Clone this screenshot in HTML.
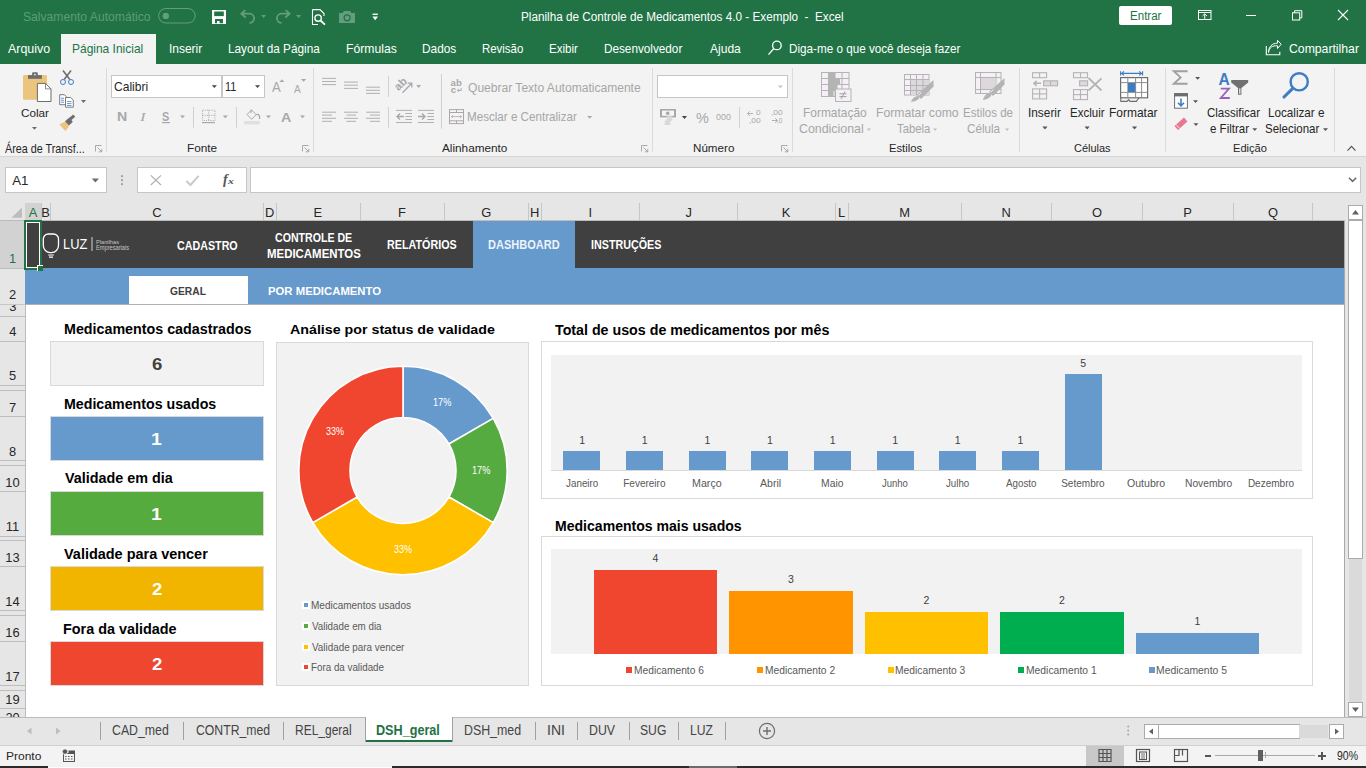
<!DOCTYPE html>
<html><head><meta charset="utf-8"><style>
html,body{margin:0;padding:0;width:1366px;height:768px;overflow:hidden;background:#fff;font-family:"Liberation Sans",sans-serif;}
body>div,body>svg{position:absolute;box-sizing:border-box;}
.t{white-space:nowrap;transform-origin:0 0;}
</style></head><body>
<div style="left:0px;top:0px;width:1366px;height:64px;background:#217346;"></div>
<div style="left:61px;top:34px;width:95px;height:30px;background:#f3f3f3;"></div>
<div style="left:0px;top:64px;width:1366px;height:92px;background:#f3f3f3;"></div>
<div style="left:0px;top:156px;width:1366px;height:1px;background:#d5d5d5;"></div>
<div style="left:0px;top:157px;width:1366px;height:64px;background:#e6e6e6;"></div>
<div style="left:5px;top:167px;width:102px;height:26px;background:#fff;border:1px solid #c6c6c6;"></div>
<div style="left:137px;top:167px;width:110px;height:26px;background:#fff;border:1px solid #c6c6c6;"></div>
<div style="left:250px;top:167px;width:111px;height:26px;background:#fff;border:1px solid #c6c6c6;width:1111px;"></div>
<div style="left:0px;top:203px;width:1345px;height:18px;background:#e6e6e6;"></div>
<div style="left:0px;top:220px;width:1345px;height:1px;background:#bcbcbc;"></div>
<div style="left:25px;top:221px;width:1320px;height:497px;background:#ffffff;"></div>
<div style="left:0px;top:221px;width:25px;height:497px;background:#e6e6e6;"></div>
<div style="left:25px;top:221px;width:1px;height:497px;background:#bcbcbc;"></div>
<div style="left:25px;top:221px;width:1319px;height:47px;background:#404040;"></div>
<div style="left:473px;top:221px;width:102px;height:47px;background:#6699cc;"></div>
<div style="left:25px;top:268px;width:1319px;height:36px;background:#6699cc;"></div>
<div style="left:129px;top:276px;width:119px;height:28px;background:#ffffff;"></div>
<div style="left:25px;top:304px;width:1319px;height:1px;background:#b0b0b0;"></div>
<div style="left:50px;top:341px;width:214px;height:45px;background:#f2f2f2;border:1px solid #d9d9d9;"></div>
<div style="left:50px;top:416px;width:214px;height:45px;background:#6699cc;border:1px solid #d9d9d9;"></div>
<div style="left:50px;top:491px;width:214px;height:45px;background:#56ab3e;border:1px solid #d9d9d9;"></div>
<div style="left:50px;top:566px;width:214px;height:45px;background:#f1b500;border:1px solid #d9d9d9;"></div>
<div style="left:50px;top:641px;width:214px;height:45px;background:#ef462f;border:1px solid #d9d9d9;"></div>
<div style="left:276px;top:342px;width:253px;height:344px;background:#f2f2f2;border:1px solid #d9d9d9;"></div>
<div style="left:541px;top:341px;width:772px;height:158px;background:#ffffff;border:1px solid #d9d9d9;"></div>
<div style="left:551px;top:355px;width:751px;height:116px;background:#f2f2f2;"></div>
<div style="left:551px;top:470px;width:751px;height:1px;background:#d9d9d9;"></div>
<div style="left:541px;top:536px;width:772px;height:150px;background:#ffffff;border:1px solid #d9d9d9;"></div>
<div style="left:551px;top:549px;width:751px;height:105px;background:#f2f2f2;"></div>
<div style="left:1345px;top:203px;width:21px;height:515px;background:#e6e6e6;"></div>
<div style="left:1344px;top:221px;width:1px;height:497px;background:#a8a8a8;"></div>
<div style="left:0px;top:746px;width:1366px;height:21px;background:#f3f3f3;"></div>
<div style="left:0px;top:766px;width:48px;height:2px;background:#2b2b2b;"></div>
<div style="left:392px;top:766px;width:297px;height:2px;background:#2b2b2b;"></div>
<div style="left:689px;top:766px;width:48px;height:2px;background:#6b6b6b;"></div>
<div style="left:737px;top:766px;width:629px;height:2px;background:#2b2b2b;"></div>
<div class="t" style="left:22.91px;top:10.77px;font-size:12.79px;line-height:12.79px;color:#5e9c77;font-weight:normal;font-style:normal;font-family:'Liberation Sans',sans-serif;transform:scaleX(0.9500);">Salvamento Automático</div>
<div class="t" style="left:520.56px;top:10.22px;font-size:13.08px;line-height:13.08px;color:#ffffff;font-weight:normal;font-style:normal;font-family:'Liberation Sans',sans-serif;transform:scaleX(0.8968);">Planilha de Controle de Medicamentos 4.0 - Exemplo  -  Excel</div>
<div style="left:1119px;top:6px;width:53px;height:19px;background:#ffffff;border-radius:2px;"></div>
<div class="t" style="left:1129.68px;top:10.09px;font-size:12.65px;line-height:12.65px;color:#217346;font-weight:normal;font-style:normal;font-family:'Liberation Sans',sans-serif;transform:scaleX(0.9140);">Entrar</div>
<div class="t" style="left:8.10px;top:43.19px;font-size:12.06px;line-height:12.06px;color:#fff;font-weight:normal;font-style:normal;font-family:'Liberation Sans',sans-serif;transform:scaleX(1.0304);">Arquivo</div>
<div class="t" style="left:72.44px;top:43.19px;font-size:12.06px;line-height:12.06px;color:#217346;font-weight:normal;font-style:normal;font-family:'Liberation Sans',sans-serif;transform:scaleX(0.9937);">Página Inicial</div>
<div class="t" style="left:168.92px;top:43.19px;font-size:12.06px;line-height:12.06px;color:#fff;font-weight:normal;font-style:normal;font-family:'Liberation Sans',sans-serif;transform:scaleX(0.9915);">Inserir</div>
<div class="t" style="left:228.06px;top:43.19px;font-size:12.06px;line-height:12.06px;color:#fff;font-weight:normal;font-style:normal;font-family:'Liberation Sans',sans-serif;transform:scaleX(0.9786);">Layout da Página</div>
<div class="t" style="left:345.82px;top:43.19px;font-size:12.06px;line-height:12.06px;color:#fff;font-weight:normal;font-style:normal;font-family:'Liberation Sans',sans-serif;transform:scaleX(1.0113);">Fórmulas</div>
<div class="t" style="left:422.05px;top:43.19px;font-size:12.06px;line-height:12.06px;color:#fff;font-weight:normal;font-style:normal;font-family:'Liberation Sans',sans-serif;transform:scaleX(0.9837);">Dados</div>
<div class="t" style="left:481.88px;top:43.19px;font-size:12.06px;line-height:12.06px;color:#fff;font-weight:normal;font-style:normal;font-family:'Liberation Sans',sans-serif;transform:scaleX(0.9482);">Revisão</div>
<div class="t" style="left:549.28px;top:43.19px;font-size:12.06px;line-height:12.06px;color:#fff;font-weight:normal;font-style:normal;font-family:'Liberation Sans',sans-serif;transform:scaleX(0.9572);">Exibir</div>
<div class="t" style="left:604.46px;top:43.19px;font-size:12.06px;line-height:12.06px;color:#fff;font-weight:normal;font-style:normal;font-family:'Liberation Sans',sans-serif;transform:scaleX(0.9742);">Desenvolvedor</div>
<div class="t" style="left:710.00px;top:43.19px;font-size:12.06px;line-height:12.06px;color:#fff;font-weight:normal;font-style:normal;font-family:'Liberation Sans',sans-serif;">Ajuda</div>
<div class="t" style="left:789.46px;top:43.19px;font-size:12.06px;line-height:12.06px;color:#fff;font-weight:normal;font-style:normal;font-family:'Liberation Sans',sans-serif;transform:scaleX(0.9698);">Diga-me o que você deseja fazer</div>
<div class="t" style="left:1288.89px;top:43.19px;font-size:12.06px;line-height:12.06px;color:#fff;font-weight:normal;font-style:normal;font-family:'Liberation Sans',sans-serif;transform:scaleX(1.0147);">Compartilhar</div>
<div class="t" style="left:21.11px;top:108.22px;font-size:11.19px;line-height:11.19px;color:#262626;font-weight:normal;font-style:normal;font-family:'Liberation Sans',sans-serif;transform:scaleX(1.0484);">Colar</div>
<div class="t" style="left:4.50px;top:142.59px;font-size:12.06px;line-height:12.06px;color:#262626;font-weight:normal;font-style:normal;font-family:'Liberation Sans',sans-serif;transform:scaleX(0.8954);">Área de Transf...</div>
<div class="t" style="left:186.76px;top:143.32px;font-size:10.61px;line-height:10.61px;color:#262626;font-weight:normal;font-style:normal;font-family:'Liberation Sans',sans-serif;transform:scaleX(1.1120);">Fonte</div>
<div class="t" style="left:467.82px;top:81.66px;font-size:12.21px;line-height:12.21px;color:#a6a6a6;font-weight:normal;font-style:normal;font-family:'Liberation Sans',sans-serif;transform:scaleX(0.9878);">Quebrar Texto Automaticamente</div>
<div class="t" style="left:467.37px;top:111.45px;font-size:12.94px;line-height:12.94px;color:#a6a6a6;font-weight:normal;font-style:normal;font-family:'Liberation Sans',sans-serif;transform:scaleX(0.8983);">Mesclar e Centralizar</div>
<div class="t" style="left:442.20px;top:143.32px;font-size:10.61px;line-height:10.61px;color:#262626;font-weight:normal;font-style:normal;font-family:'Liberation Sans',sans-serif;transform:scaleX(1.1092);">Alinhamento</div>
<div class="t" style="left:693.27px;top:143.25px;font-size:11.05px;line-height:11.05px;color:#262626;font-weight:normal;font-style:normal;font-family:'Liberation Sans',sans-serif;transform:scaleX(1.0525);">Número</div>
<div class="t" style="left:803.44px;top:106.77px;font-size:12.79px;line-height:12.79px;color:#a6a6a6;font-weight:normal;font-style:normal;font-family:'Liberation Sans',sans-serif;transform:scaleX(0.9347);">Formatação</div>
<div class="t" style="left:799.08px;top:123.17px;font-size:12.79px;line-height:12.79px;color:#a6a6a6;font-weight:normal;font-style:normal;font-family:'Liberation Sans',sans-serif;transform:scaleX(0.9678);">Condicional</div>
<div class="t" style="left:875.52px;top:106.77px;font-size:12.79px;line-height:12.79px;color:#a6a6a6;font-weight:normal;font-style:normal;font-family:'Liberation Sans',sans-serif;transform:scaleX(0.9539);">Formatar como</div>
<div class="t" style="left:896.67px;top:123.17px;font-size:12.79px;line-height:12.79px;color:#a6a6a6;font-weight:normal;font-style:normal;font-family:'Liberation Sans',sans-serif;transform:scaleX(0.8830);">Tabela</div>
<div class="t" style="left:962.68px;top:106.77px;font-size:12.79px;line-height:12.79px;color:#a6a6a6;font-weight:normal;font-style:normal;font-family:'Liberation Sans',sans-serif;transform:scaleX(0.9024);">Estilos de</div>
<div class="t" style="left:966.92px;top:123.17px;font-size:12.79px;line-height:12.79px;color:#a6a6a6;font-weight:normal;font-style:normal;font-family:'Liberation Sans',sans-serif;transform:scaleX(0.9111);">Célula</div>
<div class="t" style="left:888.70px;top:143.29px;font-size:10.76px;line-height:10.76px;color:#262626;font-weight:normal;font-style:normal;font-family:'Liberation Sans',sans-serif;transform:scaleX(1.0460);">Estilos</div>
<div class="t" style="left:1028.23px;top:107.44px;font-size:12.35px;line-height:12.35px;color:#262626;font-weight:normal;font-style:normal;font-family:'Liberation Sans',sans-serif;transform:scaleX(0.9591);">Inserir</div>
<div class="t" style="left:1069.58px;top:107.44px;font-size:12.35px;line-height:12.35px;color:#262626;font-weight:normal;font-style:normal;font-family:'Liberation Sans',sans-serif;transform:scaleX(0.9326);">Excluir</div>
<div class="t" style="left:1109.44px;top:107.44px;font-size:12.35px;line-height:12.35px;color:#262626;font-weight:normal;font-style:normal;font-family:'Liberation Sans',sans-serif;transform:scaleX(0.9701);">Formatar</div>
<div class="t" style="left:1074.15px;top:143.45px;font-size:11.05px;line-height:11.05px;color:#262626;font-weight:normal;font-style:normal;font-family:'Liberation Sans',sans-serif;transform:scaleX(0.9929);">Células</div>
<div class="t" style="left:1206.93px;top:107.71px;font-size:11.92px;line-height:11.92px;color:#262626;font-weight:normal;font-style:normal;font-family:'Liberation Sans',sans-serif;transform:scaleX(0.9647);">Classificar</div>
<div class="t" style="left:1210.04px;top:123.61px;font-size:11.92px;line-height:11.92px;color:#262626;font-weight:normal;font-style:normal;font-family:'Liberation Sans',sans-serif;transform:scaleX(0.9683);">e Filtrar</div>
<div class="t" style="left:1268.37px;top:107.71px;font-size:11.92px;line-height:11.92px;color:#262626;font-weight:normal;font-style:normal;font-family:'Liberation Sans',sans-serif;transform:scaleX(0.9795);">Localizar e</div>
<div class="t" style="left:1264.84px;top:123.61px;font-size:11.92px;line-height:11.92px;color:#262626;font-weight:normal;font-style:normal;font-family:'Liberation Sans',sans-serif;transform:scaleX(0.9644);">Selecionar</div>
<div class="t" style="left:1232.71px;top:143.27px;font-size:10.90px;line-height:10.90px;color:#262626;font-weight:normal;font-style:normal;font-family:'Liberation Sans',sans-serif;transform:scaleX(1.0198);">Edição</div>
<div class="t" style="left:12.30px;top:174.40px;font-size:13.23px;line-height:13.23px;color:#262626;font-weight:normal;font-style:normal;font-family:'Liberation Sans',sans-serif;">A1</div>
<div style="left:25px;top:203px;width:16px;height:17px;background:#d2d2d2;"></div>
<div style="left:41px;top:203px;width:1px;height:17px;background:#c6c6c6;"></div>
<div style="left:50px;top:203px;width:1px;height:17px;background:#c6c6c6;"></div>
<div style="left:263px;top:203px;width:1px;height:17px;background:#c6c6c6;"></div>
<div style="left:276px;top:203px;width:1px;height:17px;background:#c6c6c6;"></div>
<div style="left:360px;top:203px;width:1px;height:17px;background:#c6c6c6;"></div>
<div style="left:444px;top:203px;width:1px;height:17px;background:#c6c6c6;"></div>
<div style="left:528px;top:203px;width:1px;height:17px;background:#c6c6c6;"></div>
<div style="left:541px;top:203px;width:1px;height:17px;background:#c6c6c6;"></div>
<div style="left:639px;top:203px;width:1px;height:17px;background:#c6c6c6;"></div>
<div style="left:737px;top:203px;width:1px;height:17px;background:#c6c6c6;"></div>
<div style="left:835px;top:203px;width:1px;height:17px;background:#c6c6c6;"></div>
<div style="left:848px;top:203px;width:1px;height:17px;background:#c6c6c6;"></div>
<div style="left:961px;top:203px;width:1px;height:17px;background:#c6c6c6;"></div>
<div style="left:1051px;top:203px;width:1px;height:17px;background:#c6c6c6;"></div>
<div style="left:1142px;top:203px;width:1px;height:17px;background:#c6c6c6;"></div>
<div style="left:1233px;top:203px;width:1px;height:17px;background:#c6c6c6;"></div>
<div style="left:1312px;top:203px;width:1px;height:17px;background:#c6c6c6;"></div>
<div class="t" style="left:28.68px;top:206.68px;font-size:12.90px;line-height:12.90px;color:#217346;font-weight:normal;font-style:normal;font-family:'Liberation Sans',sans-serif;">A</div>
<div class="t" style="left:41.28px;top:206.68px;font-size:12.90px;line-height:12.90px;color:#262626;font-weight:normal;font-style:normal;font-family:'Liberation Sans',sans-serif;">B</div>
<div class="t" style="left:152.23px;top:206.68px;font-size:12.90px;line-height:12.90px;color:#262626;font-weight:normal;font-style:normal;font-family:'Liberation Sans',sans-serif;">C</div>
<div class="t" style="left:264.95px;top:206.68px;font-size:12.90px;line-height:12.90px;color:#262626;font-weight:normal;font-style:normal;font-family:'Liberation Sans',sans-serif;">D</div>
<div class="t" style="left:313.62px;top:206.68px;font-size:12.90px;line-height:12.90px;color:#262626;font-weight:normal;font-style:normal;font-family:'Liberation Sans',sans-serif;">E</div>
<div class="t" style="left:398.04px;top:206.68px;font-size:12.90px;line-height:12.90px;color:#262626;font-weight:normal;font-style:normal;font-family:'Liberation Sans',sans-serif;">F</div>
<div class="t" style="left:481.35px;top:206.68px;font-size:12.90px;line-height:12.90px;color:#262626;font-weight:normal;font-style:normal;font-family:'Liberation Sans',sans-serif;">G</div>
<div class="t" style="left:529.99px;top:206.68px;font-size:12.90px;line-height:12.90px;color:#262626;font-weight:normal;font-style:normal;font-family:'Liberation Sans',sans-serif;">H</div>
<div class="t" style="left:588.39px;top:206.68px;font-size:12.90px;line-height:12.90px;color:#262626;font-weight:normal;font-style:normal;font-family:'Liberation Sans',sans-serif;">I</div>
<div class="t" style="left:685.41px;top:206.68px;font-size:12.90px;line-height:12.90px;color:#262626;font-weight:normal;font-style:normal;font-family:'Liberation Sans',sans-serif;">J</div>
<div class="t" style="left:781.63px;top:206.68px;font-size:12.90px;line-height:12.90px;color:#262626;font-weight:normal;font-style:normal;font-family:'Liberation Sans',sans-serif;">K</div>
<div class="t" style="left:837.92px;top:206.68px;font-size:12.90px;line-height:12.90px;color:#262626;font-weight:normal;font-style:normal;font-family:'Liberation Sans',sans-serif;">L</div>
<div class="t" style="left:899.28px;top:206.68px;font-size:12.90px;line-height:12.90px;color:#262626;font-weight:normal;font-style:normal;font-family:'Liberation Sans',sans-serif;">M</div>
<div class="t" style="left:1001.54px;top:206.68px;font-size:12.90px;line-height:12.90px;color:#262626;font-weight:normal;font-style:normal;font-family:'Liberation Sans',sans-serif;">N</div>
<div class="t" style="left:1091.88px;top:206.68px;font-size:12.90px;line-height:12.90px;color:#262626;font-weight:normal;font-style:normal;font-family:'Liberation Sans',sans-serif;">O</div>
<div class="t" style="left:1183.29px;top:206.68px;font-size:12.90px;line-height:12.90px;color:#262626;font-weight:normal;font-style:normal;font-family:'Liberation Sans',sans-serif;">P</div>
<div class="t" style="left:1268.08px;top:206.68px;font-size:12.90px;line-height:12.90px;color:#262626;font-weight:normal;font-style:normal;font-family:'Liberation Sans',sans-serif;">Q</div>
<div style="left:0px;top:221px;width:25px;height:47px;background:#d2d2d2;"></div>
<div style="left:0px;top:268px;width:25px;height:1px;background:#bdbdbd;"></div>
<div style="left:0px;top:304px;width:25px;height:1px;background:#bdbdbd;"></div>
<div style="left:0px;top:316px;width:25px;height:1px;background:#bdbdbd;"></div>
<div style="left:0px;top:341px;width:25px;height:1px;background:#bdbdbd;"></div>
<div style="left:0px;top:385px;width:25px;height:1px;background:#bdbdbd;"></div>
<div style="left:0px;top:390px;width:25px;height:1px;background:#bdbdbd;"></div>
<div style="left:0px;top:416px;width:25px;height:1px;background:#bdbdbd;"></div>
<div style="left:0px;top:460px;width:25px;height:1px;background:#bdbdbd;"></div>
<div style="left:0px;top:465px;width:25px;height:1px;background:#bdbdbd;"></div>
<div style="left:0px;top:491px;width:25px;height:1px;background:#bdbdbd;"></div>
<div style="left:0px;top:536px;width:25px;height:1px;background:#bdbdbd;"></div>
<div style="left:0px;top:540px;width:25px;height:1px;background:#bdbdbd;"></div>
<div style="left:0px;top:566px;width:25px;height:1px;background:#bdbdbd;"></div>
<div style="left:0px;top:610px;width:25px;height:1px;background:#bdbdbd;"></div>
<div style="left:0px;top:615px;width:25px;height:1px;background:#bdbdbd;"></div>
<div style="left:0px;top:641px;width:25px;height:1px;background:#bdbdbd;"></div>
<div style="left:0px;top:685px;width:25px;height:1px;background:#bdbdbd;"></div>
<div style="left:0px;top:690px;width:25px;height:1px;background:#bdbdbd;"></div>
<div style="left:0px;top:708px;width:25px;height:1px;background:#bdbdbd;"></div>
<div style="left:0px;top:726px;width:25px;height:1px;background:#bdbdbd;"></div>
<div class="t" style="left:8.96px;top:253.48px;font-size:12.90px;line-height:12.90px;color:#217346;font-weight:normal;font-style:normal;font-family:'Liberation Sans',sans-serif;">1</div>
<div class="t" style="left:9.09px;top:289.48px;font-size:12.90px;line-height:12.90px;color:#262626;font-weight:normal;font-style:normal;font-family:'Liberation Sans',sans-serif;">2</div>
<div class="t" style="left:9.15px;top:301.18px;font-size:12.90px;line-height:12.90px;color:#262626;font-weight:normal;font-style:normal;font-family:'Liberation Sans',sans-serif;">3</div>
<div class="t" style="left:9.15px;top:326.48px;font-size:12.90px;line-height:12.90px;color:#262626;font-weight:normal;font-style:normal;font-family:'Liberation Sans',sans-serif;">4</div>
<div class="t" style="left:9.09px;top:370.48px;font-size:12.90px;line-height:12.90px;color:#262626;font-weight:normal;font-style:normal;font-family:'Liberation Sans',sans-serif;">5</div>
<div class="t" style="left:9.09px;top:402.08px;font-size:12.90px;line-height:12.90px;color:#262626;font-weight:normal;font-style:normal;font-family:'Liberation Sans',sans-serif;">7</div>
<div class="t" style="left:9.09px;top:445.88px;font-size:12.90px;line-height:12.90px;color:#262626;font-weight:normal;font-style:normal;font-family:'Liberation Sans',sans-serif;">8</div>
<div class="t" style="left:5.31px;top:476.78px;font-size:12.90px;line-height:12.90px;color:#262626;font-weight:normal;font-style:normal;font-family:'Liberation Sans',sans-serif;">10</div>
<div class="t" style="left:5.85px;top:521.18px;font-size:12.90px;line-height:12.90px;color:#262626;font-weight:normal;font-style:normal;font-family:'Liberation Sans',sans-serif;">11</div>
<div class="t" style="left:5.31px;top:551.98px;font-size:12.90px;line-height:12.90px;color:#262626;font-weight:normal;font-style:normal;font-family:'Liberation Sans',sans-serif;">13</div>
<div class="t" style="left:5.24px;top:595.88px;font-size:12.90px;line-height:12.90px;color:#262626;font-weight:normal;font-style:normal;font-family:'Liberation Sans',sans-serif;">14</div>
<div class="t" style="left:5.31px;top:626.73px;font-size:12.90px;line-height:12.90px;color:#262626;font-weight:normal;font-style:normal;font-family:'Liberation Sans',sans-serif;">16</div>
<div class="t" style="left:5.37px;top:670.88px;font-size:12.90px;line-height:12.90px;color:#262626;font-weight:normal;font-style:normal;font-family:'Liberation Sans',sans-serif;">17</div>
<div class="t" style="left:5.37px;top:693.78px;font-size:12.90px;line-height:12.90px;color:#262626;font-weight:normal;font-style:normal;font-family:'Liberation Sans',sans-serif;">19</div>
<div class="t" style="left:5.44px;top:711.68px;font-size:12.90px;line-height:12.90px;color:#262626;font-weight:normal;font-style:normal;font-family:'Liberation Sans',sans-serif;">20</div>
<div style="left:0px;top:299px;width:25px;height:5px;background:#e6e6e6;"></div>
<div style="left:0px;top:304px;width:25px;height:1px;background:#c6c6c6;"></div>
<div class="t" style="left:62.87px;top:236.66px;font-size:14.10px;line-height:14.10px;color:#ffffff;font-weight:normal;font-style:normal;font-family:'Liberation Sans',sans-serif;transform:scaleX(0.9134);">LUZ</div>
<div style="left:91px;top:237px;width:2px;height:14px;background:#8a8a8a;"></div>
<div class="t" style="left:96.05px;top:239.23px;font-size:6.10px;line-height:6.10px;color:#c4c4c4;font-weight:normal;font-style:normal;font-family:'Liberation Sans',sans-serif;transform:scaleX(0.9294);">Planilhas</div>
<div class="t" style="left:96.05px;top:244.99px;font-size:6.40px;line-height:6.40px;color:#c4c4c4;font-weight:normal;font-style:normal;font-family:'Liberation Sans',sans-serif;transform:scaleX(0.8877);">Empresariais</div>
<div class="t" style="left:176.87px;top:239.96px;font-size:12.21px;line-height:12.21px;color:#ffffff;font-weight:bold;font-style:normal;font-family:'Liberation Sans',sans-serif;transform:scaleX(0.8779);">CADASTRO</div>
<div class="t" style="left:274.98px;top:232.09px;font-size:12.06px;line-height:12.06px;color:#ffffff;font-weight:bold;font-style:normal;font-family:'Liberation Sans',sans-serif;transform:scaleX(0.8795);">CONTROLE DE</div>
<div class="t" style="left:266.81px;top:248.46px;font-size:12.21px;line-height:12.21px;color:#ffffff;font-weight:bold;font-style:normal;font-family:'Liberation Sans',sans-serif;transform:scaleX(0.9375);">MEDICAMENTOS</div>
<div class="t" style="left:387.05px;top:240.01px;font-size:11.92px;line-height:11.92px;color:#ffffff;font-weight:bold;font-style:normal;font-family:'Liberation Sans',sans-serif;transform:scaleX(0.9028);">RELATÓRIOS</div>
<div class="t" style="left:487.64px;top:240.01px;font-size:11.92px;line-height:11.92px;color:#eef4fb;font-weight:bold;font-style:normal;font-family:'Liberation Sans',sans-serif;transform:scaleX(0.9257);">DASHBOARD</div>
<div class="t" style="left:590.66px;top:240.01px;font-size:11.92px;line-height:11.92px;color:#ffffff;font-weight:bold;font-style:normal;font-family:'Liberation Sans',sans-serif;transform:scaleX(0.9015);">INSTRUÇÕES</div>
<div class="t" style="left:170.39px;top:284.95px;font-size:11.63px;line-height:11.63px;color:#404040;font-weight:bold;font-style:normal;font-family:'Liberation Sans',sans-serif;transform:scaleX(0.8827);">GERAL</div>
<div class="t" style="left:268.12px;top:284.95px;font-size:11.63px;line-height:11.63px;color:#ffffff;font-weight:bold;font-style:normal;font-family:'Liberation Sans',sans-serif;transform:scaleX(0.9745);">POR MEDICAMENTO</div>
<div class="t" style="left:63.84px;top:322.91px;font-size:13.81px;line-height:13.81px;color:#000000;font-weight:bold;font-style:normal;font-family:'Liberation Sans',sans-serif;transform:scaleX(1.0352);">Medicamentos cadastrados</div>
<div class="t" style="left:63.65px;top:397.89px;font-size:13.95px;line-height:13.95px;color:#000000;font-weight:bold;font-style:normal;font-family:'Liberation Sans',sans-serif;transform:scaleX(1.0181);">Medicamentos usados</div>
<div class="t" style="left:64.50px;top:472.39px;font-size:13.95px;line-height:13.95px;color:#000000;font-weight:bold;font-style:normal;font-family:'Liberation Sans',sans-serif;transform:scaleX(1.0296);">Validade em dia</div>
<div class="t" style="left:63.90px;top:547.69px;font-size:13.95px;line-height:13.95px;color:#000000;font-weight:bold;font-style:normal;font-family:'Liberation Sans',sans-serif;transform:scaleX(1.0367);">Validade para vencer</div>
<div class="t" style="left:63.04px;top:623.39px;font-size:13.95px;line-height:13.95px;color:#000000;font-weight:bold;font-style:normal;font-family:'Liberation Sans',sans-serif;transform:scaleX(1.0320);">Fora da validade</div>
<div class="t" style="left:152.04px;top:356.76px;font-size:15.99px;line-height:15.99px;color:#404040;font-weight:bold;font-style:normal;font-family:'Liberation Sans',sans-serif;transform:scaleX(1.1616);">6</div>
<div class="t" style="left:151.44px;top:430.72px;font-size:16.28px;line-height:16.28px;color:#ffffff;font-weight:bold;font-style:normal;font-family:'Liberation Sans',sans-serif;transform:scaleX(1.1894);">1</div>
<div class="t" style="left:151.44px;top:505.72px;font-size:16.28px;line-height:16.28px;color:#ffffff;font-weight:bold;font-style:normal;font-family:'Liberation Sans',sans-serif;transform:scaleX(1.1894);">1</div>
<div class="t" style="left:152.04px;top:580.62px;font-size:16.28px;line-height:16.28px;color:#ffffff;font-weight:bold;font-style:normal;font-family:'Liberation Sans',sans-serif;transform:scaleX(1.1408);">2</div>
<div class="t" style="left:152.04px;top:655.62px;font-size:16.28px;line-height:16.28px;color:#ffffff;font-weight:bold;font-style:normal;font-family:'Liberation Sans',sans-serif;transform:scaleX(1.1408);">2</div>
<div class="t" style="left:290.02px;top:322.93px;font-size:13.66px;line-height:13.66px;color:#000000;font-weight:bold;font-style:normal;font-family:'Liberation Sans',sans-serif;transform:scaleX(1.0422);">Análise por status de validade</div>
<div class="t" style="left:555.06px;top:322.86px;font-size:14.10px;line-height:14.10px;color:#000000;font-weight:bold;font-style:normal;font-family:'Liberation Sans',sans-serif;transform:scaleX(1.0105);">Total de usos de medicamentos por mês</div>
<div class="t" style="left:555.16px;top:519.99px;font-size:13.95px;line-height:13.95px;color:#000000;font-weight:bold;font-style:normal;font-family:'Liberation Sans',sans-serif;transform:scaleX(1.0082);">Medicamentos mais usados</div>
<svg style="left:290px;top:360px;" width="230" height="230" viewBox="0 0 230 230"><path d="M113.00,6.30 A104.2,104.2 0 0 1 203.24,58.40 L158.90,84.00 A53.0,53.0 0 0 0 113.00,57.50 Z" fill="#6699cc" stroke="#ffffff" stroke-width="1.6" stroke-linejoin="round"/><path d="M203.24,58.40 A104.2,104.2 0 0 1 203.24,162.60 L158.90,137.00 A53.0,53.0 0 0 0 158.90,84.00 Z" fill="#55ab3f" stroke="#ffffff" stroke-width="1.6" stroke-linejoin="round"/><path d="M203.24,162.60 A104.2,104.2 0 0 1 22.76,162.60 L67.10,137.00 A53.0,53.0 0 0 0 158.90,137.00 Z" fill="#ffc000" stroke="#ffffff" stroke-width="1.6" stroke-linejoin="round"/><path d="M22.76,162.60 A104.2,104.2 0 0 1 113.00,6.30 L113.00,57.50 A53.0,53.0 0 0 0 67.10,137.00 Z" fill="#f0462f" stroke="#ffffff" stroke-width="1.6" stroke-linejoin="round"/></svg>
<div class="t" style="left:433.36px;top:397.94px;font-size:10.47px;line-height:10.47px;color:#ffffff;font-weight:normal;font-style:normal;font-family:'Liberation Sans',sans-serif;transform:scaleX(0.8791);">17%</div>
<div class="t" style="left:472.36px;top:466.34px;font-size:10.47px;line-height:10.47px;color:#ffffff;font-weight:normal;font-style:normal;font-family:'Liberation Sans',sans-serif;transform:scaleX(0.8791);">17%</div>
<div class="t" style="left:393.93px;top:544.94px;font-size:10.47px;line-height:10.47px;color:#ffffff;font-weight:normal;font-style:normal;font-family:'Liberation Sans',sans-serif;transform:scaleX(0.8609);">33%</div>
<div class="t" style="left:325.73px;top:427.14px;font-size:10.47px;line-height:10.47px;color:#ffffff;font-weight:normal;font-style:normal;font-family:'Liberation Sans',sans-serif;transform:scaleX(0.8609);">33%</div>
<div style="left:302.3px;top:601.1999999999999px;width:7.5px;height:7.5px;background:#ffffff;"></div>
<div style="left:304.1px;top:603.0px;width:4px;height:4px;background:#6699cc;"></div>
<div class="t" style="left:311.30px;top:599.72px;font-size:11.19px;line-height:11.19px;color:#595959;font-weight:normal;font-style:normal;font-family:'Liberation Sans',sans-serif;transform:scaleX(0.8930);">Medicamentos usados</div>
<div style="left:302.3px;top:622.0999999999999px;width:7.5px;height:7.5px;background:#ffffff;"></div>
<div style="left:304.1px;top:623.9px;width:4px;height:4px;background:#55ab3f;"></div>
<div class="t" style="left:312.10px;top:620.62px;font-size:11.19px;line-height:11.19px;color:#595959;font-weight:normal;font-style:normal;font-family:'Liberation Sans',sans-serif;transform:scaleX(0.8758);">Validade em dia</div>
<div style="left:302.3px;top:643.1999999999999px;width:7.5px;height:7.5px;background:#ffffff;"></div>
<div style="left:304.1px;top:645.0px;width:4px;height:4px;background:#ffc000;"></div>
<div class="t" style="left:312.10px;top:641.72px;font-size:11.19px;line-height:11.19px;color:#595959;font-weight:normal;font-style:normal;font-family:'Liberation Sans',sans-serif;transform:scaleX(0.8808);">Validade para vencer</div>
<div style="left:302.3px;top:663.0999999999999px;width:7.5px;height:7.5px;background:#ffffff;"></div>
<div style="left:304.1px;top:664.9px;width:4px;height:4px;background:#f0462f;"></div>
<div class="t" style="left:311.32px;top:661.62px;font-size:11.19px;line-height:11.19px;color:#595959;font-weight:normal;font-style:normal;font-family:'Liberation Sans',sans-serif;transform:scaleX(0.8761);">Fora da validade</div>
<div style="left:563px;top:451px;width:37px;height:19px;background:#6699cc;"></div>
<div class="t" style="left:579.25px;top:434.91px;font-size:10.50px;line-height:10.50px;color:#404040;font-weight:normal;font-style:normal;font-family:'Liberation Sans',sans-serif;">1</div>
<div class="t" style="left:565.70px;top:479.21px;font-size:10.03px;line-height:10.03px;color:#595959;font-weight:normal;font-style:normal;font-family:'Liberation Sans',sans-serif;transform:scaleX(0.9836);">Janeiro</div>
<div style="left:626px;top:451px;width:37px;height:19px;background:#6699cc;"></div>
<div class="t" style="left:641.86px;top:434.91px;font-size:10.50px;line-height:10.50px;color:#404040;font-weight:normal;font-style:normal;font-family:'Liberation Sans',sans-serif;">1</div>
<div class="t" style="left:623.20px;top:479.21px;font-size:10.03px;line-height:10.03px;color:#595959;font-weight:normal;font-style:normal;font-family:'Liberation Sans',sans-serif;">Fevereiro</div>
<div style="left:689px;top:451px;width:37px;height:19px;background:#6699cc;"></div>
<div class="t" style="left:704.46px;top:434.91px;font-size:10.50px;line-height:10.50px;color:#404040;font-weight:normal;font-style:normal;font-family:'Liberation Sans',sans-serif;">1</div>
<div class="t" style="left:692.24px;top:479.21px;font-size:10.03px;line-height:10.03px;color:#595959;font-weight:normal;font-style:normal;font-family:'Liberation Sans',sans-serif;transform:scaleX(1.0675);">Março</div>
<div style="left:751px;top:451px;width:37px;height:19px;background:#6699cc;"></div>
<div class="t" style="left:767.06px;top:434.91px;font-size:10.50px;line-height:10.50px;color:#404040;font-weight:normal;font-style:normal;font-family:'Liberation Sans',sans-serif;">1</div>
<div class="t" style="left:759.60px;top:479.21px;font-size:10.03px;line-height:10.03px;color:#595959;font-weight:normal;font-style:normal;font-family:'Liberation Sans',sans-serif;transform:scaleX(1.0546);">Abril</div>
<div style="left:814px;top:451px;width:37px;height:19px;background:#6699cc;"></div>
<div class="t" style="left:829.66px;top:434.91px;font-size:10.50px;line-height:10.50px;color:#404040;font-weight:normal;font-style:normal;font-family:'Liberation Sans',sans-serif;">1</div>
<div class="t" style="left:820.87px;top:479.21px;font-size:10.03px;line-height:10.03px;color:#595959;font-weight:normal;font-style:normal;font-family:'Liberation Sans',sans-serif;transform:scaleX(1.0353);">Maio</div>
<div style="left:877px;top:451px;width:37px;height:19px;background:#6699cc;"></div>
<div class="t" style="left:892.25px;top:434.91px;font-size:10.50px;line-height:10.50px;color:#404040;font-weight:normal;font-style:normal;font-family:'Liberation Sans',sans-serif;">1</div>
<div class="t" style="left:881.90px;top:479.21px;font-size:10.03px;line-height:10.03px;color:#595959;font-weight:normal;font-style:normal;font-family:'Liberation Sans',sans-serif;transform:scaleX(0.9493);">Junho</div>
<div style="left:939px;top:451px;width:37px;height:19px;background:#6699cc;"></div>
<div class="t" style="left:954.86px;top:434.91px;font-size:10.50px;line-height:10.50px;color:#404040;font-weight:normal;font-style:normal;font-family:'Liberation Sans',sans-serif;">1</div>
<div class="t" style="left:946.10px;top:479.21px;font-size:10.03px;line-height:10.03px;color:#595959;font-weight:normal;font-style:normal;font-family:'Liberation Sans',sans-serif;transform:scaleX(0.9697);">Julho</div>
<div style="left:1002px;top:451px;width:37px;height:19px;background:#6699cc;"></div>
<div class="t" style="left:1017.46px;top:434.91px;font-size:10.50px;line-height:10.50px;color:#404040;font-weight:normal;font-style:normal;font-family:'Liberation Sans',sans-serif;">1</div>
<div class="t" style="left:1005.50px;top:479.21px;font-size:10.03px;line-height:10.03px;color:#595959;font-weight:normal;font-style:normal;font-family:'Liberation Sans',sans-serif;transform:scaleX(0.9786);">Agosto</div>
<div style="left:1065px;top:374px;width:37px;height:96px;background:#6699cc;"></div>
<div class="t" style="left:1080.16px;top:357.91px;font-size:10.50px;line-height:10.50px;color:#404040;font-weight:normal;font-style:normal;font-family:'Liberation Sans',sans-serif;">5</div>
<div class="t" style="left:1061.20px;top:479.21px;font-size:10.03px;line-height:10.03px;color:#595959;font-weight:normal;font-style:normal;font-family:'Liberation Sans',sans-serif;">Setembro</div>
<div class="t" style="left:1126.68px;top:479.21px;font-size:10.03px;line-height:10.03px;color:#595959;font-weight:normal;font-style:normal;font-family:'Liberation Sans',sans-serif;transform:scaleX(1.0543);">Outubro</div>
<div class="t" style="left:1184.58px;top:479.21px;font-size:10.03px;line-height:10.03px;color:#595959;font-weight:normal;font-style:normal;font-family:'Liberation Sans',sans-serif;transform:scaleX(1.0222);">Novembro</div>
<div class="t" style="left:1247.90px;top:479.21px;font-size:10.03px;line-height:10.03px;color:#595959;font-weight:normal;font-style:normal;font-family:'Liberation Sans',sans-serif;">Dezembro</div>
<div style="left:594px;top:570px;width:123px;height:84px;background:#f0462f;"></div>
<div class="t" style="left:652.61px;top:553.31px;font-size:10.50px;line-height:10.50px;color:#404040;font-weight:normal;font-style:normal;font-family:'Liberation Sans',sans-serif;">4</div>
<div style="left:626px;top:667px;width:6px;height:6px;background:#f0462f;"></div>
<div class="t" style="left:634.28px;top:664.77px;font-size:10.90px;line-height:10.90px;color:#595959;font-weight:normal;font-style:normal;font-family:'Liberation Sans',sans-serif;transform:scaleX(0.9391);">Medicamento 6</div>
<div style="left:729px;top:591px;width:124px;height:63px;background:#ff9300;"></div>
<div class="t" style="left:788.11px;top:574.31px;font-size:10.50px;line-height:10.50px;color:#404040;font-weight:normal;font-style:normal;font-family:'Liberation Sans',sans-serif;">3</div>
<div style="left:757px;top:667px;width:6px;height:6px;background:#ff9300;"></div>
<div class="t" style="left:764.68px;top:664.77px;font-size:10.90px;line-height:10.90px;color:#595959;font-weight:normal;font-style:normal;font-family:'Liberation Sans',sans-serif;transform:scaleX(0.9418);">Medicamento 2</div>
<div style="left:865px;top:612px;width:123px;height:42px;background:#ffc000;"></div>
<div class="t" style="left:923.56px;top:595.31px;font-size:10.50px;line-height:10.50px;color:#404040;font-weight:normal;font-style:normal;font-family:'Liberation Sans',sans-serif;">2</div>
<div style="left:888px;top:667px;width:6px;height:6px;background:#ffc000;"></div>
<div class="t" style="left:895.18px;top:664.77px;font-size:10.90px;line-height:10.90px;color:#595959;font-weight:normal;font-style:normal;font-family:'Liberation Sans',sans-serif;transform:scaleX(0.9445);">Medicamento 3</div>
<div style="left:1000px;top:612px;width:124px;height:42px;background:#00ae50;"></div>
<div class="t" style="left:1059.06px;top:595.31px;font-size:10.50px;line-height:10.50px;color:#404040;font-weight:normal;font-style:normal;font-family:'Liberation Sans',sans-serif;">2</div>
<div style="left:1018px;top:667px;width:6px;height:6px;background:#00ae50;"></div>
<div class="t" style="left:1025.77px;top:664.77px;font-size:10.90px;line-height:10.90px;color:#595959;font-weight:normal;font-style:normal;font-family:'Liberation Sans',sans-serif;transform:scaleX(0.9487);">Medicamento 1</div>
<div style="left:1136px;top:633px;width:123px;height:21px;background:#6699cc;"></div>
<div class="t" style="left:1194.45px;top:616.31px;font-size:10.50px;line-height:10.50px;color:#404040;font-weight:normal;font-style:normal;font-family:'Liberation Sans',sans-serif;">1</div>
<div style="left:1149px;top:667px;width:6px;height:6px;background:#6699cc;"></div>
<div class="t" style="left:1156.37px;top:664.77px;font-size:10.90px;line-height:10.90px;color:#595959;font-weight:normal;font-style:normal;font-family:'Liberation Sans',sans-serif;transform:scaleX(0.9527);">Medicamento 5</div>
<div style="left:0px;top:718px;width:1366px;height:27px;background:#e6e6e6;"></div>
<div style="left:0px;top:717px;width:1366px;height:1px;background:#bcbcbc;"></div>
<div style="left:365px;top:717px;width:88px;height:25px;background:#ffffff;"></div>
<div style="left:365px;top:740px;width:88px;height:2px;background:#217346;"></div>
<div style="left:0px;top:745px;width:1366px;height:1px;background:#d0d0d0;"></div>
<div style="left:100px;top:722px;width:1px;height:18px;background:#a0a0a0;"></div>
<div style="left:183px;top:722px;width:1px;height:18px;background:#a0a0a0;"></div>
<div style="left:283px;top:722px;width:1px;height:18px;background:#a0a0a0;"></div>
<div style="left:535px;top:722px;width:1px;height:18px;background:#a0a0a0;"></div>
<div style="left:577px;top:722px;width:1px;height:18px;background:#a0a0a0;"></div>
<div style="left:629px;top:722px;width:1px;height:18px;background:#a0a0a0;"></div>
<div style="left:678px;top:722px;width:1px;height:18px;background:#a0a0a0;"></div>
<div style="left:725px;top:722px;width:1px;height:18px;background:#a0a0a0;"></div>
<div style="left:365px;top:717px;width:1px;height:25px;background:#a0a0a0;"></div>
<div style="left:452px;top:717px;width:1px;height:25px;background:#a0a0a0;"></div>
<div class="t" style="left:112.38px;top:724.11px;font-size:13.81px;line-height:13.81px;color:#444444;font-weight:normal;font-style:normal;font-family:'Liberation Sans',sans-serif;transform:scaleX(0.8919);">CAD_med</div>
<div class="t" style="left:195.79px;top:724.11px;font-size:13.81px;line-height:13.81px;color:#444444;font-weight:normal;font-style:normal;font-family:'Liberation Sans',sans-serif;transform:scaleX(0.8872);">CONTR_med</div>
<div class="t" style="left:295.44px;top:724.11px;font-size:13.81px;line-height:13.81px;color:#444444;font-weight:normal;font-style:normal;font-family:'Liberation Sans',sans-serif;transform:scaleX(0.8691);">REL_geral</div>
<div class="t" style="left:464.01px;top:724.11px;font-size:13.81px;line-height:13.81px;color:#444444;font-weight:normal;font-style:normal;font-family:'Liberation Sans',sans-serif;transform:scaleX(0.8962);">DSH_med</div>
<div class="t" style="left:546.74px;top:724.11px;font-size:13.81px;line-height:13.81px;color:#444444;font-weight:normal;font-style:normal;font-family:'Liberation Sans',sans-serif;transform:scaleX(1.0139);">INI</div>
<div class="t" style="left:589.21px;top:724.11px;font-size:13.81px;line-height:13.81px;color:#444444;font-weight:normal;font-style:normal;font-family:'Liberation Sans',sans-serif;transform:scaleX(0.8935);">DUV</div>
<div class="t" style="left:640.31px;top:724.11px;font-size:13.81px;line-height:13.81px;color:#444444;font-weight:normal;font-style:normal;font-family:'Liberation Sans',sans-serif;transform:scaleX(0.8828);">SUG</div>
<div class="t" style="left:690.23px;top:724.11px;font-size:13.81px;line-height:13.81px;color:#444444;font-weight:normal;font-style:normal;font-family:'Liberation Sans',sans-serif;transform:scaleX(0.8796);">LUZ</div>
<div class="t" style="left:376.34px;top:724.11px;font-size:13.81px;line-height:13.81px;color:#217346;font-weight:bold;font-style:normal;font-family:'Liberation Sans',sans-serif;transform:scaleX(0.9152);">DSH_geral</div>
<svg style="left:20px;top:722px;" width="50" height="16" viewBox="0 0 50 16"><path d="M11.5,5.6 L7,9 L11.5,12.4 Z" fill="#bdbdbd"/><path d="M36,5.6 L40.5,9 L36,12.4 Z" fill="#bdbdbd"/></svg>
<svg style="left:757px;top:722px;" width="20" height="18" viewBox="0 0 20 18"><circle cx="10" cy="9" r="7.6" fill="none" stroke="#6d6d6d" stroke-width="1.2"/><path d="M10,5 V13 M6,9 H14" stroke="#6d6d6d" stroke-width="1.4"/></svg>
<svg style="left:1124px;top:722px;" width="10" height="16" viewBox="0 0 10 16"><circle cx="4.2" cy="4.6" r="1" fill="#a6a6a6"/><circle cx="4.2" cy="8.6" r="1" fill="#a6a6a6"/><circle cx="4.2" cy="12.6" r="1" fill="#a6a6a6"/></svg>
<div style="left:1144px;top:724px;width:15px;height:15px;background:#ffffff;border:1px solid #ababab;"></div>
<svg style="left:1144px;top:724px;" width="15" height="15" viewBox="0 0 15 15"><path d="M5,7.5 L9,4.5 V10.5 Z" fill="#606060"/></svg>
<div style="left:1158px;top:724px;width:142px;height:15px;background:#ffffff;border:1px solid #ababab;"></div>
<div style="left:1299px;top:725px;width:29px;height:13px;background:#dadada;"></div>
<div style="left:1329px;top:724px;width:15px;height:15px;background:#ffffff;border:1px solid #ababab;"></div>
<svg style="left:1329px;top:724px;" width="15" height="15" viewBox="0 0 15 15"><path d="M10,7.5 L6,4.5 V10.5 Z" fill="#606060"/></svg>
<div style="left:1348px;top:205px;width:15px;height:15px;background:#ffffff;border:1px solid #ababab;"></div>
<svg style="left:1348px;top:205px;" width="15" height="15" viewBox="0 0 15 15"><path d="M7.5,5 L11,9.5 H4 Z" fill="#606060"/></svg>
<div style="left:1348px;top:220px;width:15px;height:339px;background:#ffffff;border:1px solid #ababab;"></div>
<div style="left:1349px;top:559px;width:13px;height:143px;background:#dadada;"></div>
<div style="left:1348px;top:702px;width:15px;height:15px;background:#ffffff;border:1px solid #ababab;"></div>
<svg style="left:1348px;top:702px;" width="15" height="15" viewBox="0 0 15 15"><path d="M7.5,10 L11,5.5 H4 Z" fill="#606060"/></svg>
<div class="t" style="left:6.34px;top:750.23px;font-size:11.77px;line-height:11.77px;color:#262626;font-weight:normal;font-style:normal;font-family:'Liberation Sans',sans-serif;transform:scaleX(1.0204);">Pronto</div>
<svg style="left:60px;top:747px;" width="18" height="16" viewBox="0 0 18 16"><rect x="3.5" y="6.5" width="11" height="8" fill="none" stroke="#555" stroke-width="1"/><rect x="8.5" y="3.5" width="6.5" height="3" fill="#555"/><circle cx="5" cy="4.6" r="2.7" fill="#555" stroke="#f3f3f3" stroke-width="0.8"/><path d="M5,9.5h1.5M8,9.5h1.5M11,9.5h1.5M5,12h1.5M8,12h1.5M11,12h1.5" stroke="#555" stroke-width="1"/></svg>
<div style="left:1086px;top:746px;width:38px;height:20px;background:#c8c8c8;"></div>
<svg style="left:1097px;top:748px;" width="16" height="16" viewBox="0 0 16 16"><path d="M2,1.5H14V13.5H2Z M2,5.5H14 M2,9.5H14 M6,1.5V13.5 M10,1.5V13.5" fill="none" stroke="#555" stroke-width="1.2"/></svg>
<svg style="left:1135px;top:748px;" width="16" height="16" viewBox="0 0 16 16"><rect x="1.5" y="1.5" width="13" height="12" fill="none" stroke="#555" stroke-width="1.2"/><rect x="4.5" y="4" width="7" height="7.5" fill="none" stroke="#555" stroke-width="1"/><path d="M6,6h4M6,8h4M6,10h4" stroke="#555" stroke-width="0.8"/></svg>
<svg style="left:1173px;top:748px;" width="16" height="16" viewBox="0 0 16 16"><rect x="1.5" y="1.5" width="13" height="12" fill="none" stroke="#555" stroke-width="1.2"/><path d="M6,1.5V7.5H1.5 M9.5,1.5V7.5" fill="none" stroke="#555" stroke-width="1.2"/></svg>
<div style="left:1205px;top:755px;width:6px;height:2px;background:#555;"></div>
<div style="left:1215px;top:755px;width:100px;height:1px;background:#a8a8a8;"></div>
<div style="left:1258px;top:750px;width:5px;height:11px;background:#606060;"></div>
<div style="left:1265px;top:752px;width:1px;height:6px;background:#a8a8a8;"></div>
<div style="left:1318px;top:755px;width:8px;height:2px;background:#555;"></div>
<div style="left:1321px;top:752px;width:2px;height:8px;background:#555;"></div>
<div class="t" style="left:1336.68px;top:749.56px;font-size:12.21px;line-height:12.21px;color:#262626;font-weight:normal;font-style:normal;font-family:'Liberation Sans',sans-serif;transform:scaleX(0.8605);">90%</div>
<svg style="left:150px;top:0px;" width="240" height="32" viewBox="0 0 240 32"><rect x="8.6" y="8.5" width="36.6" height="14.5" rx="7.25" fill="none" stroke="rgba(255,255,255,0.3)" stroke-width="1"/><circle cx="15.8" cy="15.9" r="3.2" fill="rgba(255,255,255,0.3)"/><path d="M62,10 H76 V24 H62 Z" fill="#fff"/><rect x="64.2" y="11.5" width="9.6" height="4.6" fill="#217346"/><path d="M65,19 H73 V23.2 H69.6 V21 H67 V23.2 H65 Z" fill="#217346"/><path d="M95.3,10.2 L91.4,13.7 L95.7,17.5 M91.6,13.7 H99.5 A4.6,4.6 0 0 1 99.5,22.9" fill="none" stroke="rgba(255,255,255,0.3)" stroke-width="1.8"/><path d="M111.2,15 H116 L113.6,17.9 Z" fill="rgba(255,255,255,0.3)"/><path d="M135.7,10.2 L139.6,13.7 L135.3,17.5 M139.4,13.7 H131.5 A4.6,4.6 0 0 0 131.5,22.9" fill="none" stroke="rgba(255,255,255,0.3)" stroke-width="1.8"/><path d="M146,15 H151.2 L148.6,17.9 Z" fill="rgba(255,255,255,0.3)"/><path d="M162.5,9.6 H170 L174,13.6 V16 M162.5,9.6 V24.5 H168" fill="none" stroke="#fff" stroke-width="1.1"/><circle cx="168.1" cy="18.1" r="3.2" fill="none" stroke="#fff" stroke-width="1.4"/><path d="M170.5,20.5 L175,24.6" stroke="#fff" stroke-width="1.9"/><path d="M189,13 H192.5 L194,11 H200 L201.5,13 H205 V23 H189 Z" fill="rgba(255,255,255,0.3)"/><circle cx="197.1" cy="17.8" r="3" fill="none" stroke="#217346" stroke-width="1.2"/><rect x="222.6" y="13.6" width="5.2" height="1.4" fill="#fff"/><path d="M222.4,16.6 H228 L225.2,20.3 Z" fill="#fff"/></svg>
<svg style="left:1190px;top:0px;" width="170" height="32" viewBox="0 0 170 32"><rect x="8.5" y="10.5" width="12.5" height="9" fill="none" stroke="#fff" stroke-width="1"/><path d="M8.5,12.5 H21" stroke="#fff" stroke-width="1"/><path d="M14.75,19.5 V14 M12.5,16 L14.75,13.8 L17,16" fill="none" stroke="#fff" stroke-width="1"/><path d="M56,15.5 H66" stroke="#fff" stroke-width="1"/><rect x="102.5" y="12.8" width="7.2" height="7.2" fill="none" stroke="#fff" stroke-width="1"/><path d="M104.6,12.8 V10.7 H111.8 V17.9 H109.7" fill="none" stroke="#fff" stroke-width="1"/><path d="M148,10 L158,20 M158,10 L148,20" stroke="#fff" stroke-width="1.1"/></svg>
<svg style="left:760px;top:36px;" width="40" height="24" viewBox="0 0 40 24"><circle cx="16.9" cy="9.4" r="4.3" fill="none" stroke="#fff" stroke-width="1.3"/><path d="M13.8,12.5 L8.5,18.6" stroke="#fff" stroke-width="1.3"/></svg>
<svg style="left:1260px;top:36px;" width="30" height="24" viewBox="0 0 30 24"><path d="M6.3,10 V18.8 H19.8 V15.8" fill="none" stroke="#fff" stroke-width="1.1"/><path d="M8.5,16.5 C9,11.5 12.5,9.5 17.5,9.8 V12.5 L21.2,8.2 L17.5,4.4 V7.2 C12,7.2 8.5,11 8.5,16.5 Z" fill="none" stroke="#fff" stroke-width="1"/></svg>
<svg style="left:15px;top:66px;" width="80" height="70" viewBox="0 0 80 70"><rect x="8" y="9.1" width="23.9" height="24.6" rx="1.2" fill="#ebc47e"/><rect x="13" y="9.1" width="13.9" height="3.7" fill="#6d6d6d"/><rect x="17.1" y="6.2" width="5.7" height="4" rx="1" fill="#6d6d6d"/><circle cx="19.9" cy="8.6" r="0.9" fill="#f3f3f3"/><path d="M22.4,17.4 H30.5 L36,22.9 V35.5 H22.4 Z" fill="#fff" stroke="#6d6d6d" stroke-width="1"/><path d="M30.5,17.4 V22.9 H36" fill="none" stroke="#6d6d6d" stroke-width="0.8"/><path d="M48,4.6 L54.8,13.5 M56,4.6 L49.2,13.5" stroke="#6d6d6d" stroke-width="1.6"/><circle cx="48" cy="16" r="2.5" fill="none" stroke="#3e7cc4" stroke-width="1"/><circle cx="56" cy="16" r="2.5" fill="none" stroke="#3e7cc4" stroke-width="1"/><path d="M44.7,28.7 H49.5 L51.2,30.4 V38.7 H44.7 Z" fill="#fff" stroke="#6d6d6d" stroke-width="0.9"/><path d="M50.5,31.5 H55.7 L58.3,34.1 V41.2 H50.5 Z" fill="#fff" stroke="#6d6d6d" stroke-width="0.9"/><path d="M46,32.2 H49 M46,34.2 H49 M46,36.2 H49 M52,35.6 H56.5 M52,37.6 H56.5 M52,39.5 H56.5" stroke="#3e7cc4" stroke-width="0.8"/><path d="M66,34 H71 L68.5,36.9 Z" fill="#6d6d6d"/><path d="M44.3,58.2 L50.6,55.6 L54.2,60 L50.4,65 Z" fill="#ebc47e"/><path d="M50,55.2 L54.4,51.6 L57.8,55.8 L54,59.6 Z" fill="#6d6d6d"/><path d="M55.2,53.2 L59.2,49.6" stroke="#6d6d6d" stroke-width="3"/><path d="M16.9,60.9 H22 L19.45,63.8 Z" fill="#6d6d6d"/></svg>
<svg style="left:95px;top:145px;" width="8" height="8" viewBox="0 0 8 8"><path d="M0.5,6.5 V0.5 H6.5" fill="none" stroke="#a0a0a0" stroke-width="0.9"/><path d="M2.5,2.5 L6.8,6.8 M3.8,6.8 H6.8 V3.8" fill="none" stroke="#a0a0a0" stroke-width="0.9"/></svg>
<svg style="left:302px;top:145px;" width="8" height="8" viewBox="0 0 8 8"><path d="M0.5,6.5 V0.5 H6.5" fill="none" stroke="#a0a0a0" stroke-width="0.9"/><path d="M2.5,2.5 L6.8,6.8 M3.8,6.8 H6.8 V3.8" fill="none" stroke="#a0a0a0" stroke-width="0.9"/></svg>
<svg style="left:641px;top:145px;" width="8" height="8" viewBox="0 0 8 8"><path d="M0.5,6.5 V0.5 H6.5" fill="none" stroke="#a0a0a0" stroke-width="0.9"/><path d="M2.5,2.5 L6.8,6.8 M3.8,6.8 H6.8 V3.8" fill="none" stroke="#a0a0a0" stroke-width="0.9"/></svg>
<svg style="left:781.3px;top:145px;" width="8" height="8" viewBox="0 0 8 8"><path d="M0.5,6.5 V0.5 H6.5" fill="none" stroke="#a0a0a0" stroke-width="0.9"/><path d="M2.5,2.5 L6.8,6.8 M3.8,6.8 H6.8 V3.8" fill="none" stroke="#a0a0a0" stroke-width="0.9"/></svg>
<div style="left:106px;top:68px;width:1px;height:84px;background:#dadada;"></div>
<div style="left:313px;top:68px;width:1px;height:84px;background:#dadada;"></div>
<div style="left:652px;top:68px;width:1px;height:84px;background:#dadada;"></div>
<div style="left:792px;top:68px;width:1px;height:84px;background:#dadada;"></div>
<div style="left:1019px;top:68px;width:1px;height:84px;background:#dadada;"></div>
<div style="left:1165px;top:68px;width:1px;height:84px;background:#dadada;"></div>
<div style="left:1334px;top:68px;width:1px;height:84px;background:#dadada;"></div>
<div style="left:111px;top:75px;width:154px;height:23px;background:#ffffff;border:1px solid #c6c6c6;"></div>
<div style="left:221px;top:75px;width:2px;height:23px;background:#c6c6c6;"></div>
<div class="t" style="left:113.90px;top:80.75px;font-size:12.94px;line-height:12.94px;color:#262626;font-weight:normal;font-style:normal;font-family:'Liberation Sans',sans-serif;transform:scaleX(0.9316);">Calibri</div>
<div class="t" style="left:224.94px;top:80.75px;font-size:12.94px;line-height:12.94px;color:#262626;font-weight:normal;font-style:normal;font-family:'Liberation Sans',sans-serif;transform:scaleX(0.8385);">11</div>
<svg style="left:0px;top:0px;" width="320" height="160" viewBox="0 0 320 160"><path d="M211.8,85.2 H216.9 L214.35000000000002,87.9 Z" fill="#444"/><path d="M255,85.2 H260.1 L257.55,87.9 Z" fill="#444"/><path d="M279.5,82 H284.3 L281.9,79.3 Z" fill="#a8a8a8"/><path d="M301,79 H306.2 L303.6,81.8 Z" fill="#a8a8a8"/><path d="M180,115.6 H185 L182.5,118.3 Z" fill="#a8a8a8"/><path d="M222.7,115.6 H227.9 L225.3,118.3 Z" fill="#a8a8a8"/><path d="M266,115.6 H271 L268.5,118.3 Z" fill="#a8a8a8"/><path d="M300,115.6 H305 L302.5,118.3 Z" fill="#a8a8a8"/><rect x="193" y="107" width="1" height="20.6" fill="#d0d0d0"/><rect x="236" y="107" width="1" height="20.6" fill="#d0d0d0"/><path d="M202.5,110.2 H215 V120.5 H202.5 Z M202.5,115.35 H215 M208.75,110.2 V120.5" fill="none" stroke="#a8a8a8" stroke-width="1" stroke-dasharray="1,1.2"/><rect x="202" y="122" width="13" height="1.2" fill="#a8a8a8"/><rect x="162" y="122" width="8" height="1.2" fill="#a8a8a8"/><path d="M251,109.6 V113 M247,114.5 L251.5,110 L256.2,114.6 L251.6,119.3 Z" fill="none" stroke="#a8a8a8" stroke-width="1"/><path d="M256.2,114.6 C258.8,113.5 260,115.6 259.6,119" fill="none" stroke="#a8a8a8" stroke-width="1.3"/><rect x="244" y="121" width="15.6" height="3.4" fill="#e2dee2"/></svg>
<div class="t" style="left:271.80px;top:79.92px;font-size:14.97px;line-height:14.97px;color:#a8a8a8;font-weight:normal;font-style:normal;font-family:'Liberation Sans',sans-serif;transform:scaleX(0.8773);">A</div>
<div class="t" style="left:294.20px;top:82.63px;font-size:11.77px;line-height:11.77px;color:#a8a8a8;font-weight:normal;font-style:normal;font-family:'Liberation Sans',sans-serif;transform:scaleX(0.8621);">A</div>
<div class="t" style="left:116.75px;top:111.09px;font-size:12.65px;line-height:12.65px;color:#a8a8a8;font-weight:bold;font-style:normal;font-family:'Liberation Sans',sans-serif;transform:scaleX(1.1203);">N</div>
<div class="t" style="left:140.17px;top:111.09px;font-size:12.65px;line-height:12.65px;color:#a8a8a8;font-weight:normal;font-style:italic;font-family:'Liberation Serif',sans-serif;transform:scaleX(1.3383);">I</div>
<div class="t" style="left:162.48px;top:111.09px;font-size:12.65px;line-height:12.65px;color:#a8a8a8;font-weight:bold;font-style:normal;font-family:'Liberation Sans',sans-serif;transform:scaleX(0.8556);">S</div>
<div class="t" style="left:281.31px;top:110.93px;font-size:13.66px;line-height:13.66px;color:#a8a8a8;font-weight:bold;font-style:normal;font-family:'Liberation Sans',sans-serif;transform:scaleX(1.0441);">A</div>
<svg style="left:0px;top:0px;" width="660" height="160" viewBox="0 0 660 160"><path d="M322,78.4 H336" stroke="#a8a8a8" stroke-width="0.9"/><path d="M322,81.5 H336" stroke="#a8a8a8" stroke-width="0.9"/><path d="M322,84.6 H336" stroke="#a8a8a8" stroke-width="0.9"/><path d="M344,82.1 H358" stroke="#a8a8a8" stroke-width="0.9"/><path d="M344,85.2 H358" stroke="#a8a8a8" stroke-width="0.9"/><path d="M344,88.4 H358" stroke="#a8a8a8" stroke-width="0.9"/><path d="M366,87.2 H380" stroke="#a8a8a8" stroke-width="0.9"/><path d="M366,90.3 H380" stroke="#a8a8a8" stroke-width="0.9"/><path d="M366,93.4 H380" stroke="#a8a8a8" stroke-width="0.9"/><path d="M322,112.2 H336" stroke="#a8a8a8" stroke-width="0.9"/><path d="M344,112.2 H358" stroke="#a8a8a8" stroke-width="0.9"/><path d="M366,112.2 H380" stroke="#a8a8a8" stroke-width="0.9"/><path d="M322,115.1 H332" stroke="#a8a8a8" stroke-width="0.9"/><path d="M346.4,115.1 H356" stroke="#a8a8a8" stroke-width="0.9"/><path d="M370,115.1 H380" stroke="#a8a8a8" stroke-width="0.9"/><path d="M322,118.3 H336" stroke="#a8a8a8" stroke-width="0.9"/><path d="M344,118.3 H358" stroke="#a8a8a8" stroke-width="0.9"/><path d="M366,118.3 H380" stroke="#a8a8a8" stroke-width="0.9"/><path d="M322,121.3 H332" stroke="#a8a8a8" stroke-width="0.9"/><path d="M346.4,121.3 H356" stroke="#a8a8a8" stroke-width="0.9"/><path d="M370,121.3 H380" stroke="#a8a8a8" stroke-width="0.9"/><rect x="388" y="76" width="1" height="21" fill="#d0d0d0"/><rect x="388" y="107" width="1" height="20.6" fill="#d0d0d0"/><rect x="441" y="74" width="1" height="54.6" fill="#d0d0d0"/><text x="0" y="0" transform="translate(398.6,91.2) rotate(-45)" font-family="Liberation Sans" font-weight="bold" font-size="11.2" fill="#a8a8a8">ab</text><path d="M402.5,92.8 L411.5,83.5 M407.6,83.2 H411.8 V87.4" fill="none" stroke="#a8a8a8" stroke-width="1.3"/><path d="M416.3,85 H421 L418.65,88 Z" fill="#a8a8a8"/><path d="M396,110.4 H412" stroke="#a8a8a8" stroke-width="0.9"/><path d="M396,122.5 H412" stroke="#a8a8a8" stroke-width="0.9"/><path d="M405.4,113.5 H412" stroke="#a8a8a8" stroke-width="0.9"/><path d="M405.4,116.5 H412" stroke="#a8a8a8" stroke-width="0.9"/><path d="M405.4,119.5 H412" stroke="#a8a8a8" stroke-width="0.9"/><path d="M404,116.5 H397 M400,113.5 L397,116.5 L400,119.5" fill="none" stroke="#a8a8a8" stroke-width="1.4"/><path d="M418,110.4 H434" stroke="#a8a8a8" stroke-width="0.9"/><path d="M418,122.5 H434" stroke="#a8a8a8" stroke-width="0.9"/><path d="M427.4,113.5 H434" stroke="#a8a8a8" stroke-width="0.9"/><path d="M427.4,116.5 H434" stroke="#a8a8a8" stroke-width="0.9"/><path d="M427.4,119.5 H434" stroke="#a8a8a8" stroke-width="0.9"/><path d="M418,116.5 H425 M422,113.5 L425,116.5 L422,119.5" fill="none" stroke="#a8a8a8" stroke-width="1.4"/><text x="450.6" y="86" font-family="Liberation Sans" font-weight="bold" font-size="9.6" fill="#a8a8a8">ab</text><text x="450.8" y="92.9" font-family="Liberation Sans" font-weight="bold" font-size="9.6" fill="#a8a8a8">c</text><path d="M461.2,88.2 V90.4 H457.4 M458.8,89 L457.4,90.4 L458.8,91.8" fill="none" stroke="#a8a8a8" stroke-width="1"/><rect x="449.5" y="109.6" width="14" height="14" fill="#f7f3f7" stroke="#a8a8a8" stroke-width="1"/><path d="M449.5,112.5 H463.5 M449.5,120.8 H463.5 M456.5,109.6 V112.5 M456.5,120.8 V123.6" fill="none" stroke="#a8a8a8" stroke-width="1"/><path d="M451.5,116.6 H461.5 M453,115.2 L451.5,116.6 L453,118 M460,115.2 L461.5,116.6 L460,118" fill="none" stroke="#a8a8a8" stroke-width="0.8"/><path d="M587.2,116 H592.2 L589.7,118.7 Z" fill="#a8a8a8"/></svg>
<div style="left:657px;top:75px;width:131px;height:23px;background:#ffffff;border:1px solid #c6c6c6;"></div>
<svg style="left:0px;top:0px;" width="800" height="160" viewBox="0 0 800 160"><path d="M777.8,85.5 H783 L780.4,88.2 Z" fill="#c8c8c8"/><rect x="660" y="109" width="16" height="8.4" fill="#a8a8a8"/><rect x="662" y="110.6" width="12" height="5.2" fill="#f7f3f7"/><circle cx="667.7" cy="113.3" r="1.8" fill="#a8a8a8"/><ellipse cx="669.5" cy="117.2" rx="3.2" ry="1.3" fill="#d9d6d9"/><ellipse cx="669.5" cy="119.6" rx="3.2" ry="1.3" fill="#d9d6d9"/><ellipse cx="667.5" cy="121.5" rx="3.2" ry="1.3" fill="#d9d6d9"/><ellipse cx="667.5" cy="123.8" rx="3.2" ry="1.3" fill="#d9d6d9"/><path d="M681.9,116 H687 L684.45,119 Z" fill="#444"/><rect x="739" y="107" width="1" height="20.8" fill="#d0d0d0"/><path d="M747.5,113.6 H753 M749.8,111.3 L747.5,113.6 L749.8,115.9" fill="none" stroke="#a8a8a8" stroke-width="0.9"/><path d="M772,120.5 H777.5 M775.2,118.2 L777.5,120.5 L775.2,122.8" fill="none" stroke="#a8a8a8" stroke-width="0.9"/></svg>
<div class="t" style="left:696.07px;top:110.43px;font-size:15.55px;line-height:15.55px;color:#a8a8a8;font-weight:normal;font-style:normal;font-family:'Liberation Sans',sans-serif;transform:scaleX(0.9296);">%</div>
<div class="t" style="left:716.43px;top:112.38px;font-size:9.59px;line-height:9.59px;color:#a8a8a8;font-weight:normal;font-style:normal;font-family:'Liberation Sans',sans-serif;transform:scaleX(0.9303);">000</div>
<div class="t" style="left:756.25px;top:109.74px;font-size:6.69px;line-height:6.69px;color:#a8a8a8;font-weight:normal;font-style:normal;font-family:'Liberation Sans',sans-serif;transform:scaleX(1.2515);">0</div>
<div class="t" style="left:749.12px;top:117.94px;font-size:6.69px;line-height:6.69px;color:#a8a8a8;font-weight:normal;font-style:normal;font-family:'Liberation Sans',sans-serif;transform:scaleX(1.2679);">,00</div>
<div class="t" style="left:770.82px;top:109.74px;font-size:6.69px;line-height:6.69px;color:#a8a8a8;font-weight:normal;font-style:normal;font-family:'Liberation Sans',sans-serif;transform:scaleX(1.2679);">,00</div>
<div class="t" style="left:776.97px;top:117.94px;font-size:6.69px;line-height:6.69px;color:#a8a8a8;font-weight:normal;font-style:normal;font-family:'Liberation Sans',sans-serif;">,0</div>
<svg style="left:0px;top:0px;" width="1020" height="160" viewBox="0 0 1020 160"><rect x="821.5" y="72.5" width="27.5" height="24" fill="#f5f0f5" stroke="#b4b4b4" stroke-width="1"/><path d="M828.5,72.5 V96.5 M835,72.5 V96.5 M842,72.5 V96.5 M821.5,78.5 H849 M821.5,84.5 H849 M821.5,90.5 H849" stroke="#b4b4b4" stroke-width="1"/><rect x="828.5" y="72.5" width="6.5" height="5.5" fill="#b4b4b4"/><rect x="828.5" y="79" width="11.5" height="5" fill="#b4b4b4"/><rect x="828.5" y="85" width="9" height="5" fill="#b4b4b4"/><rect x="828.5" y="91" width="5" height="5.5" fill="#b4b4b4"/><rect x="835.5" y="89" width="15.5" height="12.5" fill="#f5f0f5" stroke="#b4b4b4" stroke-width="1"/><path d="M839.5,93.8 H846.5 M839.5,96.6 H846.5 M845,91.5 L841,99" stroke="#9a9a9a" stroke-width="0.9"/><rect x="904.5" y="74.5" width="24.5" height="20.5" fill="#f5f0f5" stroke="#b4b4b4" stroke-width="1"/><rect x="910" y="79.5" width="19" height="15.5" fill="#dcd8dc"/><path d="M910.5,74.5 V95 M916.5,74.5 V95 M923,74.5 V95 M904.5,79.5 H929 M904.5,85.5 H929 M904.5,90.5 H929" stroke="#b4b4b4" stroke-width="1"/><path d="M933.5,80 L933.5,86.5 L921,99 L917,95 Z" fill="#b4b4b4"/><path d="M918,96 C914,96 911.5,100 911,102 C914,101.5 918.5,100.5 919.5,97.5 Z" fill="#b4b4b4"/><path d="M921.5,92.5 L918.5,95.5" stroke="#f5f0f5" stroke-width="1"/><rect x="975.5" y="72.5" width="25.5" height="21" fill="#f5f0f5" stroke="#b4b4b4" stroke-width="1"/><path d="M975.5,77.5 H1001 M975.5,89.5 H1001 M980.5,72.5 V93.5 M996,72.5 V93.5" stroke="#b4b4b4" stroke-width="1"/><rect x="981" y="78" width="14.5" height="11" fill="#dcd8dc"/><path d="M1004.5,78 L1004.5,84.5 L993,96 L989,92 Z" fill="#b4b4b4"/><path d="M990,93 C986,93 983.5,97 983,100 C986,99.5 990.5,98.5 991.5,94.5 Z" fill="#b4b4b4"/><path d="M993.5,89.5 L990.5,92.5" stroke="#f5f0f5" stroke-width="1"/><path d="M866.8,128.5 H871 L868.9,131 Z" fill="#c0c0c0"/><path d="M933,128.5 H937.2 L935.1,131 Z" fill="#c0c0c0"/><path d="M1005,128.5 H1009.2 L1007.1,131 Z" fill="#c0c0c0"/></svg>
<svg style="left:0px;top:0px;" width="1366" height="160" viewBox="0 0 1366 160"><rect x="1032.6" y="72.7" width="14" height="5" fill="#f5f0f5" stroke="#b4b4b4" stroke-width="1.1"/><path d="M1039.6,72.7 V77.7" stroke="#b4b4b4" stroke-width="1.1"/><rect x="1043.6" y="80.8" width="14" height="5" fill="#dcd8dc" stroke="#b4b4b4" stroke-width="1.1"/><path d="M1050.6,80.8 V85.8" stroke="#b4b4b4" stroke-width="1.1"/><rect x="1032.6" y="88.9" width="14" height="10" fill="#f5f0f5" stroke="#b4b4b4" stroke-width="1.1"/><path d="M1039.6,88.9 V98.9" stroke="#b4b4b4" stroke-width="1.1"/><path d="M1032.6,93.9 H1046.6" stroke="#b4b4b4" stroke-width="1.1"/><path d="M1041,83.3 H1034 M1036.6,80.8 L1034,83.3 L1036.6,85.8" fill="none" stroke="#b4b4b4" stroke-width="1.6"/><rect x="1073.5" y="72.7" width="14" height="5" fill="#f5f0f5" stroke="#b4b4b4" stroke-width="1.1"/><path d="M1080.5,72.7 V77.7" stroke="#b4b4b4" stroke-width="1.1"/><rect x="1079.6" y="80.8" width="8" height="5" fill="#dcd8dc" stroke="#b4b4b4" stroke-width="1.1"/><rect x="1073.5" y="89.6" width="14" height="10" fill="#f5f0f5" stroke="#b4b4b4" stroke-width="1.1"/><path d="M1080.5,89.6 V99.6" stroke="#b4b4b4" stroke-width="1.1"/><path d="M1073.5,94.6 H1087.5" stroke="#b4b4b4" stroke-width="1.1"/><path d="M1088.5,78 L1101.5,90.5 M1101.5,78.3 L1088.5,90.5" stroke="#b4b4b4" stroke-width="1.8"/><path d="M1120.6,71.2 V75.6 M1142.6,71.2 V75.6 M1121.5,73.4 H1141.7 M1124,71.4 L1121.6,73.4 L1124,75.4 M1139.2,71.4 L1141.6,73.4 L1139.2,75.4" fill="none" stroke="#3e7cc4" stroke-width="1.1"/><rect x="1120.6" y="77.6" width="27" height="20.2" fill="#fff" stroke="#6d6d6d" stroke-width="1.2"/><path d="M1127.8,77.6 V97.8 M1135.6,77.6 V97.8 M1141.6,77.6 V97.8 M1120.6,82.6 H1147.6 M1120.6,92.4 H1147.6" stroke="#8d8d8d" stroke-width="1"/><rect x="1128" y="83" width="7.2" height="9" fill="#3e7cc4"/><path d="M1120.8,97.8 V101.4 H1127 L1128.6,99.6 L1130,101.4 H1136.4 L1139,97.8" fill="none" stroke="#6d6d6d" stroke-width="1.1"/><path d="M1042.4,126.6 H1047.5 L1044.95,129.4 Z" fill="#555"/><path d="M1084.6,126.6 H1089.7 L1087.15,129.4 Z" fill="#555"/><path d="M1132,126.6 H1137.1 L1134.55,129.4 Z" fill="#555"/><path d="M1187.6,71.2 H1173.8 L1180.6,77.4 L1173.8,83.8 H1187.6" fill="none" stroke="#a0a0a0" stroke-width="1.9"/><path d="M1195.2,77.1 H1200.1 L1197.65,79.8 Z" fill="#555"/><rect x="1174.6" y="93.7" width="12.8" height="14.5" fill="#fff" stroke="#6d6d6d" stroke-width="1"/><rect x="1174.1" y="93.2" width="13.8" height="3.2" fill="#6d6d6d"/><path d="M1181,98.6 V105.8 M1178,102.8 L1181,105.8 L1184,102.8" fill="none" stroke="#3e7cc4" stroke-width="1.6"/><path d="M1193.1,100.2 H1198 L1195.55,102.9 Z" fill="#555"/><path d="M1174.5,126 L1184,117.6 L1187.4,121.5 L1178,130 Z" fill="#e8788f"/><path d="M1176.2,124.6 L1179.6,128.4" stroke="#f3f3f3" stroke-width="0.9"/><path d="M1193.5,123.2 H1198.4 L1195.95,125.9 Z" fill="#555"/><text x="1218.6" y="84.8" font-family="Liberation Sans" font-weight="bold" font-size="15.6" fill="#3e7cc4">A</text><path d="M1220.8,88.6 H1229 L1220.8,98 H1229.8" fill="none" stroke="#9a5fc0" stroke-width="1.8"/><path d="M1231.2,80 H1248.2 V82.4 L1241.4,88 V94.7 H1238 V88 L1231.2,82.4 Z" fill="#707070"/><rect x="1239.2" y="88.4" width="1.2" height="5.4" fill="#f3f3f3"/><circle cx="1299.2" cy="81.8" r="8.6" fill="none" stroke="#3e7cc4" stroke-width="2.4"/><path d="M1292.8,88.4 L1284,97" stroke="#3e7cc4" stroke-width="3.1" stroke-linecap="round"/><path d="M1252.3,128.3 H1257.2 L1254.75,131 Z" fill="#555"/><path d="M1323,128.3 H1328 L1325.5,131 Z" fill="#555"/><path d="M1347.5,150.6 L1351.5,146.4 L1355.5,150.6" fill="none" stroke="#555" stroke-width="1.2"/></svg>
<svg style="left:20px;top:222px;" width="60" height="50" viewBox="0 0 60 50"><path d="M28.3,12 H33.5 A5,5 0 0 1 38.5,17 V23.6 A7,7 0 0 1 31.5,30.6 H30.3 A7,7 0 0 1 23.3,23.6 V17 A5,5 0 0 1 28.3,12 Z" fill="none" stroke="#fff" stroke-width="1.3"/><path d="M28.2,33 H33.8 M29,35.2 H33" stroke="#fff" stroke-width="1.2"/></svg>
<div style="left:24px;top:220px;width:18px;height:50px;background:transparent;border:2px solid #217346;"></div>
<div style="left:26px;top:222px;width:14px;height:46px;background:transparent;border:1px solid #ffffff;"></div>
<div style="left:37px;top:265px;width:6px;height:6px;background:#217346;border-top:1px solid #fff;border-left:1px solid #fff;"></div>
<svg style="left:0px;top:160px;" width="370" height="40" viewBox="0 0 370 40"><path d="M92,12.5 L95.5,7.5 L99,12.5 Z" fill="transparent"/><path d="M91.8,18.6 H99 L95.4,22.6 Z" fill="#6d6d6d"/><circle cx="122" cy="16.2" r="1.1" fill="#a0a0a0"/><circle cx="122" cy="20.2" r="1.1" fill="#a0a0a0"/><circle cx="122" cy="24.2" r="1.1" fill="#a0a0a0"/><path d="M150.8,15.4 L161,25 M161,15.4 L150.8,25" stroke="#b0b0b0" stroke-width="1.2"/><path d="M186.4,21 L190.5,25 L198.6,15.8" fill="none" stroke="#c8c8c8" stroke-width="1.9"/><path d="M1352.5,18.5 L1355.6,21.6 L1358.7,18.5" fill="none" stroke="#6d6d6d" stroke-width="1.6"/></svg>
<svg style="left:1340px;top:160px;" width="26" height="40" viewBox="0 0 26 40"><path d="M9,17.8 L12.6,21.4 L16.2,17.8" fill="none" stroke="#6d6d6d" stroke-width="1.6"/></svg>
<div class="t" style="left:222.60px;top:172.83px;font-size:13.66px;line-height:13.66px;color:#555555;font-weight:bold;font-style:italic;font-family:'Liberation Serif',sans-serif;transform:scaleX(1.0282);">f</div>
<div class="t" style="left:227.84px;top:178.15px;font-size:7.85px;line-height:7.85px;color:#555555;font-weight:bold;font-style:italic;font-family:'Liberation Serif',sans-serif;transform:scaleX(1.5034);">x</div>
<svg style="left:0px;top:203px;" width="25" height="18" viewBox="0 0 25 18"><path d="M22,4.4 V14.8 H11.5 Z" fill="#bcbcbc"/></svg>
</body></html>
